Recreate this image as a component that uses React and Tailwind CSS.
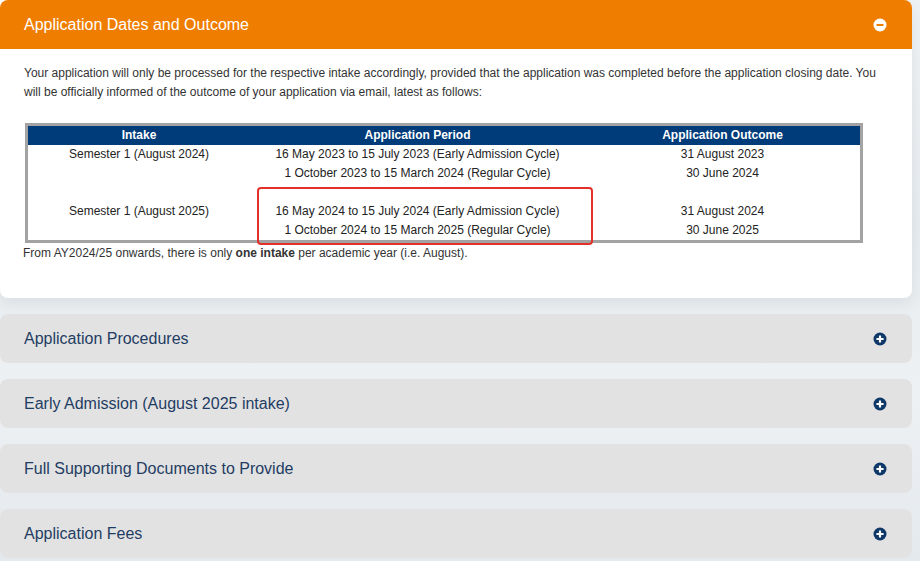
import React from "react";

const font = { fontFamily: '"Liberation Sans", Arial, sans-serif' };

function MinusIcon() {
  return (
    <svg width="14" height="14" viewBox="0 0 14 14">
      <circle cx="7" cy="7" r="6.5" fill="#fff" />
      <rect x="3.5" y="5.9" width="7" height="2.2" rx="0.4" fill="#ef7d00" />
    </svg>
  );
}

function PlusIcon() {
  return (
    <svg width="14" height="14" viewBox="0 0 14 14">
      <circle cx="7" cy="7" r="6.5" fill="#0d3868" />
      <rect x="3.4" y="5.9" width="7.2" height="2.2" rx="0.4" fill="#fff" />
      <rect x="5.9" y="3.4" width="2.2" height="7.2" rx="0.4" fill="#fff" />
    </svg>
  );
}

const rows = [
  ["Semester 1 (August 2024)", "16 May 2023 to 15 July 2023 (Early Admission Cycle)", "31 August 2023"],
  ["", "1 October 2023 to 15 March 2024 (Regular Cycle)", "30 June 2024"],
  ["", "", ""],
  ["Semester 1 (August 2025)", "16 May 2024 to 15 July 2024 (Early Admission Cycle)", "31 August 2024"],
  ["", "1 October 2024 to 15 March 2025 (Regular Cycle)", "30 June 2025"],
];

const sections = [
  "Application Procedures",
  "Early Admission (August 2025 intake)",
  "Full Supporting Documents to Provide",
  "Application Fees",
];

export default function App() {
  return (
    <div
      className="w-[920px] h-[561px] overflow-hidden bg-[linear-gradient(180deg,#eef1f4_0%,#e6ebef_40%,#edf1f4_70%,#e4e9ee_100%)]"
      style={font}
    >
      <div className="w-[912px] flex flex-col gap-4">
        {/* Expanded panel */}
        <div className="rounded-tr-lg rounded-b-lg bg-white shadow-[0_6px_14px_rgba(0,0,0,0.06)]">
          <div className="h-[49px] bg-[#ef7d00] rounded-t-lg flex items-center justify-between pl-6 pr-[25px]">
            <span className="text-white text-[16px]">Application Dates and Outcome</span>
            <MinusIcon />
          </div>
          <div className="px-6 pt-[15px] pb-[35px] text-[12px] leading-[19px] text-[#333]">
            <p>
              Your application will only be processed for the respective intake accordingly, provided that the
              application was completed before the application closing date. You will be officially informed of the
              outcome of your application via email, latest as follows:
            </p>
            <div className="relative mt-[21px] ml-px w-[838px]">
              <div className="border-[3px] border-[#a3a3a3]">
                <div className="grid grid-cols-[222px_335px_275px] bg-[#003b7a] text-white font-bold h-[19px] items-center text-center">
                  <div>Intake</div>
                  <div>Application Period</div>
                  <div>Application Outcome</div>
                </div>
                {rows.map((r, i) => (
                  <div
                    key={i}
                    className="grid grid-cols-[222px_335px_275px] h-[19px] items-center text-center text-[#222]"
                  >
                    <div>{r[0]}</div>
                    <div>{r[1]}</div>
                    <div>{r[2]}</div>
                  </div>
                ))}
              </div>
              <div className="absolute left-[232px] top-[64px] w-[336px] h-[58px] border-2 border-[#e2312b] rounded-[4px]" />
            </div>
            <p className="mt-px -ml-px">
              From AY2024/25 onwards, there is only <b>one intake</b> per academic year (i.e. August).
            </p>
          </div>
        </div>

        {/* Collapsed panels */}
        {sections.map((s) => (
          <div
            key={s}
            className="h-[49px] rounded-lg bg-[#e2e2e2] flex items-center justify-between pl-6 pr-[25px]"
          >
            <span className="text-[16px] text-[#1f3d63]">{s}</span>
            <PlusIcon />
          </div>
        ))}
      </div>
    </div>
  );
}
